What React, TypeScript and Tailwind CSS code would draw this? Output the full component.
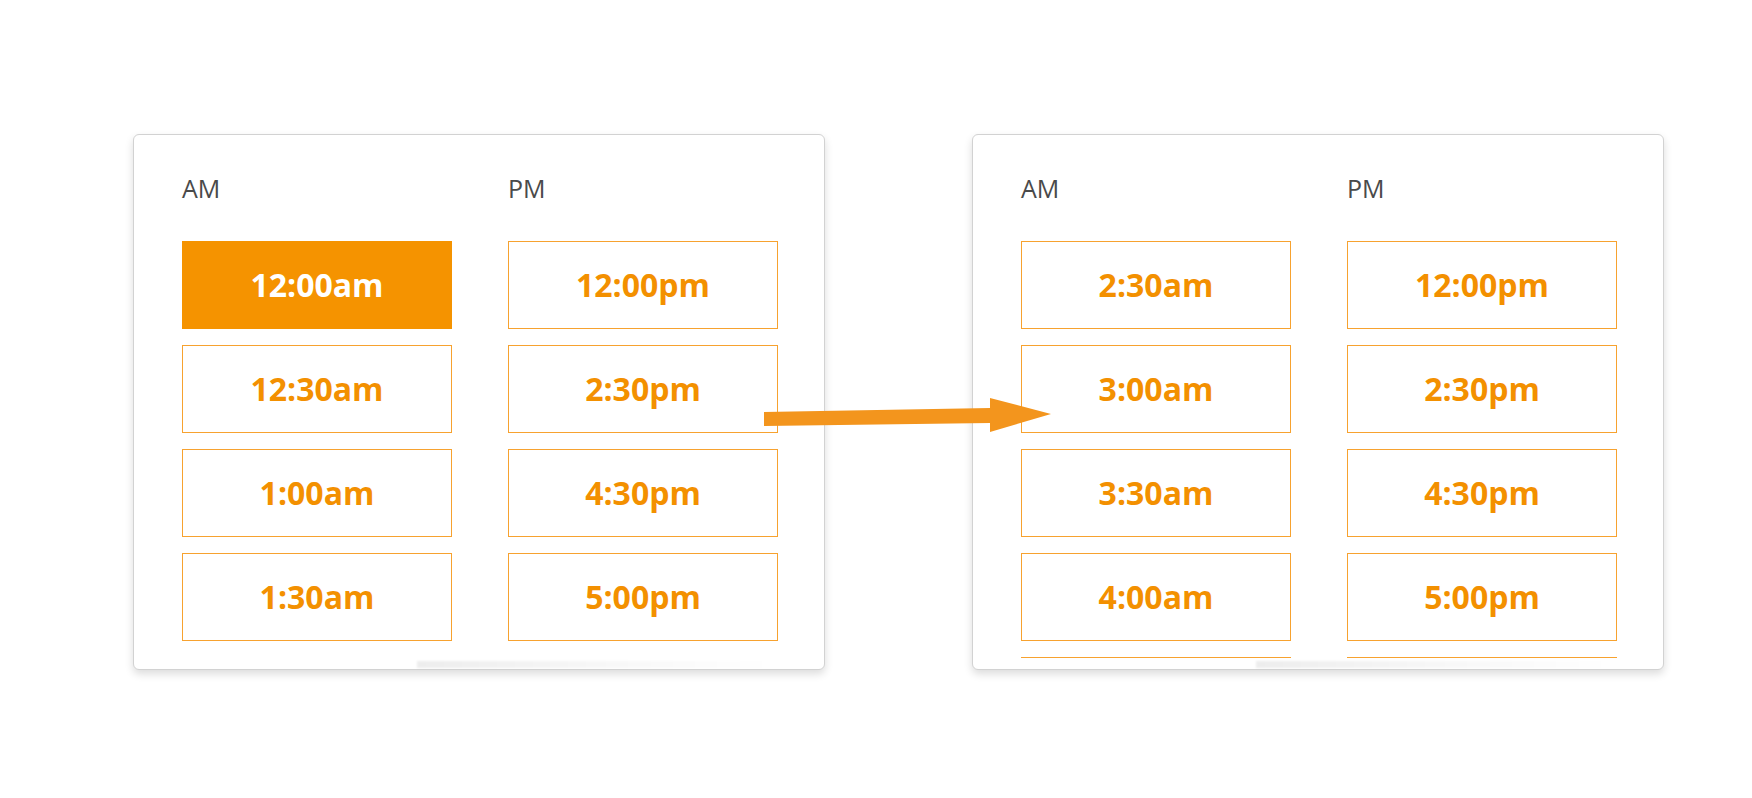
import React from "react";

type Slot = { label: string; active?: boolean };

const leftAm: Slot[] = [
  { label: "12:00am", active: true },
  { label: "12:30am" },
  { label: "1:00am" },
  { label: "1:30am" },
];
const leftPm: Slot[] = [
  { label: "12:00pm" },
  { label: "2:30pm" },
  { label: "4:30pm" },
  { label: "5:00pm" },
];
const rightAm: Slot[] = [
  { label: "2:30am" },
  { label: "3:00am" },
  { label: "3:30am" },
  { label: "4:00am" },
  { label: "4:30am" },
];
const rightPm: Slot[] = [
  { label: "12:00pm" },
  { label: "2:30pm" },
  { label: "4:30pm" },
  { label: "5:00pm" },
  { label: "5:30pm" },
];

const font = { fontFamily: "'Open Sans', Lato, sans-serif" };

function SlotButton({ slot }: { slot: Slot }) {
  return (
    <div
      className={
        slot.active
          ? "flex h-[88px] w-[270px] shrink-0 items-center justify-center border border-[#f59300] bg-[#f59300] text-[32px] font-bold text-white"
          : "flex h-[88px] w-[270px] shrink-0 items-center justify-center border border-[#f7a22f] bg-white text-[32px] font-bold text-[#f39000]"
      }
      style={font}
    >
      {slot.label}
    </div>
  );
}

function Column({ title, slots, tall }: { title: string; slots: Slot[]; tall?: boolean }) {
  return (
    <div className="flex w-[270px] flex-col">
      <div className="h-[106px] pt-[38px] text-[25px] leading-[30px] text-[#4a4a4a]" style={font}>
        {title}
      </div>
      <div className={tall ? "h-[417px] overflow-hidden" : "h-[416px] overflow-hidden"}>
        <div className="flex flex-col gap-4">
          {slots.map((s) => (
            <SlotButton key={s.label} slot={s} />
          ))}
        </div>
      </div>
    </div>
  );
}

function Picker({ am, pm, tall }: { am: Slot[]; pm: Slot[]; tall?: boolean }) {
  return (
    <div className="flex h-[536px] w-[692px] flex-col rounded-[6px] border border-[#d2d2d2] bg-white shadow-[0_4px_8px_rgba(0,0,0,0.14)]">
      <div className="flex gap-[56px] pl-[48px]">
        <Column title="AM" slots={am} tall={tall} />
        <Column title="PM" slots={pm} tall={tall} />
      </div>
      <div className="flex flex-1 items-end pb-px">
        <div className="ml-[283px] h-[7px] w-[356px] bg-gradient-to-r from-[rgba(0,0,0,0.07)] via-[rgba(0,0,0,0.03)] to-transparent blur-[1px]" />
      </div>
    </div>
  );
}

export default function App() {
  return (
    <div className="relative h-[798px] w-[1752px] overflow-hidden bg-white">
      <div className="flex gap-[147px] pl-[133px] pt-[134px]">
        <Picker am={leftAm} pm={leftPm} />
        <Picker am={rightAm} pm={rightPm} tall />
      </div>
      <svg
        className="pointer-events-none absolute left-0 top-0"
        width="1752"
        height="798"
        viewBox="0 0 1752 798"
      >
        <polygon
          points="764,412 990,408 990,398 1051,414 990,432 990,423 764,426"
          fill="#f3951d"
        />
      </svg>
    </div>
  );
}
